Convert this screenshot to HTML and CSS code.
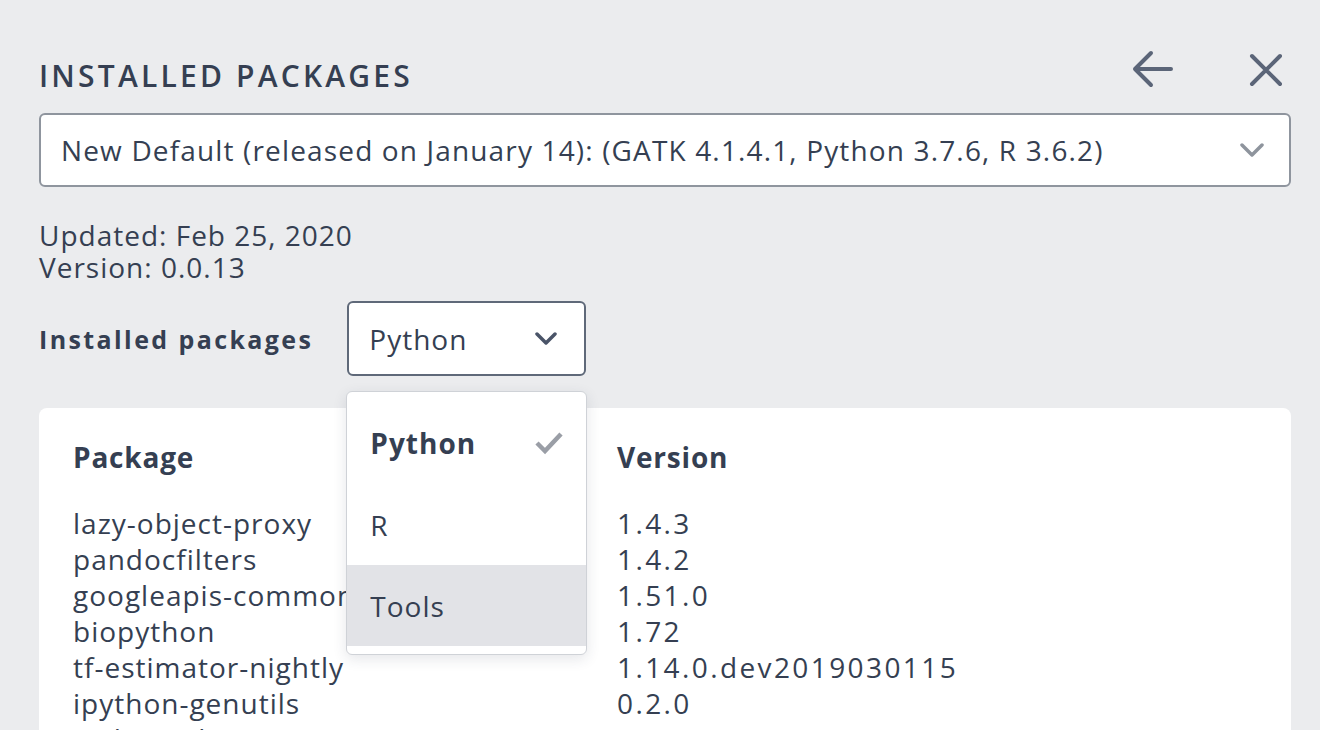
FILE: index.html
```html
<!DOCTYPE html>
<html>
<head>
<meta charset="utf-8">
<link rel="stylesheet" href="styles.css">
</head>
<body>
<div class="panel">
  <div class="header">
    <h1 class="title">INSTALLED PACKAGES</h1>
    <div class="actions">
      <svg class="icon-back" width="42" height="40" viewBox="0 0 42 40"><path d="M39 19H3M19 3L3 19l16 16" fill="none" stroke="#5b6578" stroke-width="4" stroke-linecap="round" stroke-linejoin="round"/></svg>
      <svg class="icon-close" width="34" height="34" viewBox="0 0 34 34"><path d="M3 3l28 28M31 3L3 31" fill="none" stroke="#5b6578" stroke-width="4" stroke-linecap="round"/></svg>
    </div>
  </div>
  <div class="env-select">
    <span class="env-text">New Default (released on January 14): (GATK 4.1.4.1, Python 3.7.6, R 3.6.2)</span>
    <svg class="chev" width="24" height="14" viewBox="0 0 24 14"><path d="M2 2l10 10L22 2" fill="none" stroke="#8e949d" stroke-width="3.5" stroke-linecap="round" stroke-linejoin="round"/></svg>
  </div>
  <div class="meta">
    <div>Updated: Feb 25, 2020</div>
    <div>Version: 0.0.13</div>
  </div>
  <div class="filter-row">
    <span class="filter-label">Installed packages</span>
    <div class="lang-wrap">
      <div class="lang-select">
        <span>Python</span>
        <svg width="22" height="14" viewBox="0 0 22 14"><path d="M2 2l9 9 9-9" fill="none" stroke="#4a5468" stroke-width="3.5" stroke-linecap="round" stroke-linejoin="round"/></svg>
      </div>
      <ul class="menu">
        <li class="item selected"><span>Python</span><svg width="30" height="24" viewBox="0 0 30 24"><path d="M3 12l8 8L27 3" fill="none" stroke="#9a9ea6" stroke-width="4.5" stroke-linejoin="miter"/></svg></li>
        <li class="item">R</li>
        <li class="item hover">Tools</li>
      </ul>
    </div>
  </div>
  <div class="card">
    <div class="table">
      <div class="th">Package</div><div class="th">Version</div>
      <div class="td">lazy-object-proxy</div><div class="td ver">1.4.3</div>
      <div class="td">pandocfilters</div><div class="td ver">1.4.2</div>
      <div class="td">googleapis-common-protos</div><div class="td ver">1.51.0</div>
      <div class="td">biopython</div><div class="td ver">1.72</div>
      <div class="td">tf-estimator-nightly</div><div class="td ver">1.14.0.dev2019030115</div>
      <div class="td">ipython-genutils</div><div class="td ver">0.2.0</div>
      <div class="td">widgetsnbextension</div><div class="td ver">3.5.1</div>
    </div>
  </div>
</div>
</body>
</html>
```
FILE: styles.css
```css
* { box-sizing: border-box; }
html, body { margin: 0; height: 100%; overflow: hidden; }
body {
  background: #ebecee;
  font-family: "Open Sans", "DejaVu Sans", sans-serif;
  color: #353f52;
}
.panel { padding: 44px 29px 0 39px; height: 730px; overflow: hidden; }
.header { display: flex; justify-content: space-between; align-items: flex-start; height: 69px; }
.title {
  margin: 13px 0 0 0;
  font-size: 30px;
  font-weight: 600;
  letter-spacing: 3.2px;
  line-height: 38px;
}
.actions { display: flex; gap: 75px; align-items: center; margin-right: 8px; margin-top: 6px; }
.env-select {
  height: 74px;
  background: #fff;
  border: 2px solid #8f959e;
  border-radius: 6px;
  display: flex;
  align-items: center;
  justify-content: space-between;
  padding: 0 25px 0 20px;
}
.env-text { font-size: 28px; letter-spacing: 1.15px; }
.meta { margin-top: 32px; font-size: 28px; letter-spacing: 1px; line-height: 32px; }
.filter-row { display: flex; align-items: center; margin-top: 18px; gap: 34px; }
.filter-label { font-size: 25px; font-weight: 700; letter-spacing: 2.4px; }
.lang-wrap { position: relative; }
.lang-select {
  width: 239px; height: 75px;
  background: #fff;
  border: 2px solid #5f6979;
  border-radius: 6px;
  display: flex; align-items: center; justify-content: space-between;
  padding: 0 27px 0 20px;
  font-size: 28px;
  letter-spacing: 1px;
}
.menu {
  position: absolute;
  left: -1px; top: 90px;
  width: 241px;
  margin: 0; padding: 9px 0 8px 0;
  list-style: none;
  background: #fff;
  border: 1px solid #cfd2d7;
  border-radius: 6px;
  box-shadow: 0 4px 14px rgba(40, 50, 70, 0.12);
  z-index: 2;
}
.item {
  height: 81px;
  display: flex; align-items: center; justify-content: space-between;
  padding: 0 22px 0 23px;
  font-size: 28px;
  letter-spacing: 1px;
}
.item.selected { font-weight: 700; height: 83px; }
.item.hover { background: #e2e3e7; }
.card {
  margin-top: 32px;
  background: #fff;
  border-radius: 8px;
  height: 400px;
  padding: 31px 34px 0 34px;
}
.table { display: grid; grid-template-columns: 544px 1fr; }
.th { font-size: 28px; font-weight: 700; letter-spacing: 0.8px; line-height: 36px; margin-bottom: 30px; }
.td { font-size: 28px; letter-spacing: 1px; line-height: 36px; white-space: nowrap; overflow: hidden; }
.td.ver { letter-spacing: 2.4px; }
```
